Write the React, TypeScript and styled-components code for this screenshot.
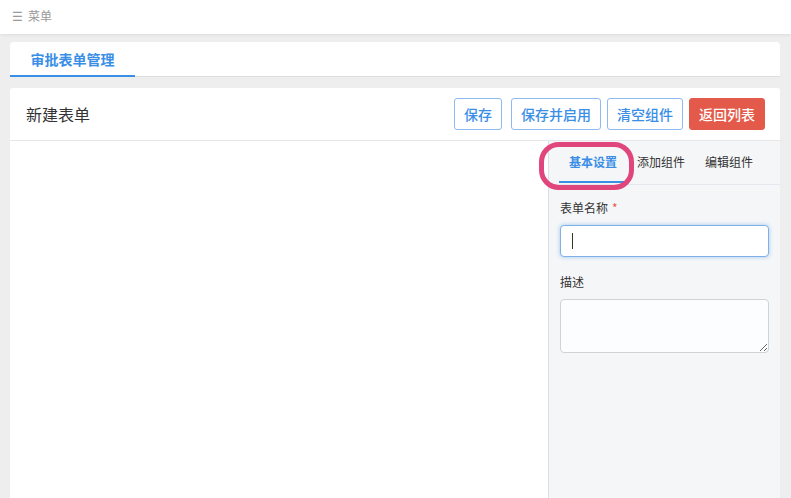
import styled, { createGlobalStyle } from "styled-components";

const GlobalStyle = createGlobalStyle`
  html, body, #root { height: 100%; }
  body {
    margin: 0;
    background: #eeeeee;
    font-family: "Noto Sans CJK SC", "Noto Sans", sans-serif;
    color: #333;
  }
  * { box-sizing: border-box; }
`;

const Page = styled.div`
  height: 100%;
  display: flex;
  flex-direction: column;
`;

const TopBar = styled.div`
  height: 34px;
  flex-shrink: 0;
  background: #fff;
  box-shadow: 0 1px 3px rgba(0, 0, 0, 0.08);
  display: flex;
  align-items: center;
  padding: 0 0 3px 12px;
  font-size: 12px;
  color: #9a9a9a;
  gap: 5px;
`;

const Main = styled.div`
  flex: 1;
  display: flex;
  flex-direction: column;
  padding: 8px 11px 0 10px;
  min-height: 0;
`;

const TabStrip = styled.div`
  height: 35px;
  flex-shrink: 0;
  background: #fff;
  border-radius: 4px 4px 0 0;
  border-bottom: 1px solid #dedede;
  display: flex;
`;

const TopTab = styled.div`
  width: 125px;
  display: flex;
  align-items: center;
  justify-content: center;
  font-size: 14px;
  font-weight: 600;
  color: #3a8ee6;
  border-bottom: 2px solid #3a8ee6;
  margin-bottom: -1px;
`;

const FormCard = styled.div`
  flex: 1;
  margin-top: 11px;
  background: #fff;
  border-radius: 3px 3px 0 0;
  display: flex;
  flex-direction: column;
  min-height: 0;
`;

const CardHeader = styled.div`
  height: 53px;
  flex-shrink: 0;
  display: flex;
  align-items: center;
  justify-content: space-between;
  padding: 0 15px 0 16px;
  border-bottom: 1px solid #e6e6e6;
`;

const Title = styled.div`
  font-size: 16px;
  color: #333;
`;

const Actions = styled.div`
  display: flex;
  gap: 6px;
  & > :first-child { margin-right: 3px; }
`;

const Button = styled.button<{ $danger?: boolean }>`
  height: 32px;
  padding: 0 9px;
  font-family: inherit;
  font-size: 14px;
  font-weight: 500;
  border-radius: 3px;
  cursor: pointer;
  border: 1px solid ${(p) => (p.$danger ? "#e45a4a" : "#8dbaf0")};
  background: ${(p) => (p.$danger ? "#e45a4a" : "#fff")};
  color: ${(p) => (p.$danger ? "#fff" : "#3a8ee6")};
`;

const CardBody = styled.div`
  flex: 1;
  display: flex;
  min-height: 0;
`;

const Canvas = styled.div`
  flex: 1;
  background: #fff;
`;

const SidePanel = styled.div`
  position: relative;
  width: 232px;
  background: #f5f6f8;
  border-left: 1px solid #dcdfe4;
  display: flex;
  flex-direction: column;
`;

const PanelTabs = styled.div`
  height: 44px;
  display: flex;
  align-items: stretch;
  padding-left: 10px;
  border-bottom: 1px solid #e4e7ed;
`;

const PanelTab = styled.div<{ $active?: boolean }>`
  width: 68px;
  display: flex;
  align-items: center;
  justify-content: center;
  font-size: 12px;
  color: ${(p) => (p.$active ? "#3a8ee6" : "#333")};
  font-weight: ${(p) => (p.$active ? 600 : 400)};
  border-bottom: 2px solid ${(p) => (p.$active ? "#3a8ee6" : "transparent")};
  margin-bottom: 1px;
`;

const Highlight = styled.div`
  position: absolute;
  left: -10px;
  top: 1px;
  width: 95px;
  height: 48px;
  border: 5px solid #e0457b;
  border-radius: 20px;
  pointer-events: none;
`;

const Form = styled.div`
  padding: 15px 11px 0;
  display: flex;
  flex-direction: column;
`;

const Field = styled.div`
  display: flex;
  flex-direction: column;
  margin-bottom: 17px;
`;

const Label = styled.label`
  font-size: 12px;
  line-height: 16px;
  color: #333;
  margin-bottom: 9px;
`;

const Required = styled.span`
  color: #e45a4a;
  margin-left: 4px;
`;

const InputWrap = styled.div`
  position: relative;
`;

const Input = styled.input`
  display: block;
  height: 32px;
  width: 100%;
  padding: 0 11px;
  font-family: inherit;
  font-size: 13px;
  background: #fff;
  border: 1px solid #7fb0e6;
  border-radius: 4px;
  box-shadow: 0 0 4px rgba(58, 142, 230, 0.45);
  outline: none;
  caret-color: transparent;
`;

const Caret = styled.span`
  position: absolute;
  left: 12px;
  top: 8px;
  width: 1px;
  height: 16px;
  background: #333;
`;

const TextArea = styled.textarea`
  display: block;
  height: 54px;
  width: 100%;
  font-family: inherit;
  font-size: 13px;
  background: #fcfdfe;
  border: 1px solid #cfd3d8;
  border-radius: 4px;
  outline: none;
  resize: vertical;
`;

export default function App() {
  return (
    <>
      <GlobalStyle />
      <Page>
        <TopBar>
          <span>☰</span>
          <span>菜单</span>
        </TopBar>
        <Main>
          <TabStrip>
            <TopTab>审批表单管理</TopTab>
          </TabStrip>
          <FormCard>
            <CardHeader>
              <Title>新建表单</Title>
              <Actions>
                <Button>保存</Button>
                <Button>保存并启用</Button>
                <Button>清空组件</Button>
                <Button $danger>返回列表</Button>
              </Actions>
            </CardHeader>
            <CardBody>
              <Canvas />
              <SidePanel>
                <PanelTabs>
                  <PanelTab $active>基本设置</PanelTab>
                  <PanelTab>添加组件</PanelTab>
                  <PanelTab>编辑组件</PanelTab>
                </PanelTabs>
                <Highlight />
                <Form>
                  <Field>
                    <Label>
                      表单名称<Required>*</Required>
                    </Label>
                    <InputWrap>
                      <Input />
                      <Caret />
                    </InputWrap>
                  </Field>
                  <Field>
                    <Label>描述</Label>
                    <TextArea />
                  </Field>
                </Form>
              </SidePanel>
            </CardBody>
          </FormCard>
        </Main>
      </Page>
    </>
  );
}
